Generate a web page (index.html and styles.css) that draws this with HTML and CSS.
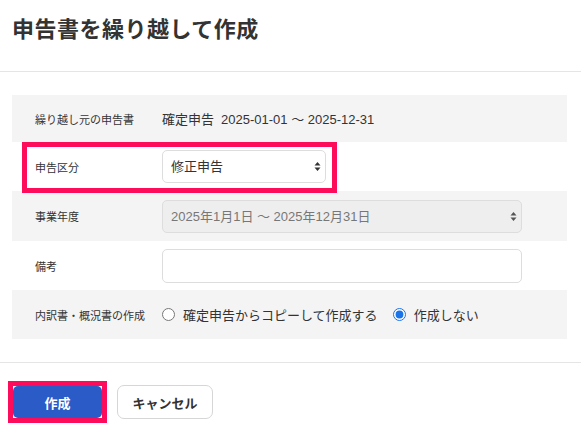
FILE: index.html
```html
<!DOCTYPE html>
<html lang="ja">
<head>
    <meta charset="UTF-8">
    <meta name="viewport" content="width=device-width, initial-scale=1.0">
    <title>申告書を繰り越して作成</title>
    <link rel="stylesheet" href="styles.css">
</head>
<body>
    <div class="modal-header">
        <h1 class="modal-title">申告書を繰り越して作成</h1>
    </div>

    <div class="modal-body">
        <div class="form-table">
            <div class="form-row shaded first">
                <div class="form-label">繰り越し元の申告書</div>
                <div class="form-value">
                    <span class="source-kind">確定申告</span>2025-01-01 ～ 2025-12-31
                </div>
            </div>
            <div class="form-row marked">
                <span class="mark-box"></span>
                <div class="form-label">申告区分</div>
                <div class="form-value">
                    <div class="select-wrap short">
                        <select class="form-select">
                            <option>修正申告</option>
                        </select>
                        <svg class="select-arrows" width="7" height="11" viewBox="0 0 7 11"><path d="M3.5 1L6.5 4.5H0.5Z M3.5 10L0.5 6.5H6.5Z" fill="#333"/></svg>
                    </div>
                </div>
            </div>
            <div class="form-row shaded tall">
                <div class="form-label">事業年度</div>
                <div class="form-value">
                    <div class="select-wrap">
                        <select class="form-select" disabled>
                            <option>2025年1月1日 ～ 2025年12月31日</option>
                        </select>
                        <svg class="select-arrows" width="7" height="11" viewBox="0 0 7 11"><path d="M3.5 1L6.5 4.5H0.5Z M3.5 10L0.5 6.5H6.5Z" fill="#555"/></svg>
                    </div>
                </div>
            </div>
            <div class="form-row">
                <div class="form-label">備考</div>
                <div class="form-value">
                    <input type="text" class="form-input">
                </div>
            </div>
            <div class="form-row shaded">
                <div class="form-label">内訳書・概況書の作成</div>
                <div class="form-value radios">
                    <label class="radio"><input type="radio" name="copy">確定申告からコピーして作成する</label>
                    <label class="radio"><input type="radio" name="copy" checked>作成しない</label>
                </div>
            </div>
        </div>
    </div>

    <div class="modal-footer">
        <span class="mark-wrap"><button class="btn btn-primary">作成</button></span>
        <button class="btn btn-default">キャンセル</button>
    </div>
</body>
</html>
```

FILE: styles.css
```css
body {
    margin: 0;
    font-family: "Liberation Sans", "Noto Sans CJK JP", sans-serif;
    color: #333;
    background: #fff;
}

.modal-header {
    height: 72px;
    box-sizing: border-box;
    padding: 16px 12px 0;
    border-bottom: 1px solid #e5e5e5;
}
.modal-title {
    margin: 0;
    font-size: 22px;
    line-height: 28px;
    letter-spacing: 0.5px;
    font-weight: bold;
    color: #333;
}

.modal-body {
    padding: 23px 14px 23px 12px;
    border-bottom: 1px solid #e5e5e5;
}
.form-row {
    display: flex;
    align-items: center;
    min-height: 49px;
    padding: 0 0 0 23px;
    box-sizing: border-box;
}
.form-row.first {
    min-height: 47px;
}
.form-row.tall {
    min-height: 50px;
}
.form-row.shaded {
    background: #f5f4f5;
}
.form-row.marked {
    position: relative;
}
.mark-box {
    position: absolute;
    left: 10px;
    top: 0;
    width: 315px;
    height: 51px;
    box-sizing: border-box;
    border: 5px solid #fc0c5a;
    pointer-events: none;
}
.form-label {
    width: 127px;
    flex-shrink: 0;
    font-size: 11px;
    color: #333;
}
.form-value {
    font-size: 13px;
    color: #333;
}
.source-kind {
    margin-right: 7px;
}

.select-wrap {
    position: relative;
    width: 360px;
}
.select-wrap.short {
    width: 164px;
}
.form-select {
    appearance: none;
    display: block;
    width: 100%;
    height: 33px;
    padding: 0 8px;
    border: 1px solid #ddd;
    border-radius: 5px;
    background: #fff;
    font-family: inherit;
    font-size: 13px;
    color: #333;
}
.form-select:disabled {
    background: #efeeee;
    color: #777;
    opacity: 1;
}
.select-arrows {
    position: absolute;
    right: 5px;
    top: 11px;
}
.form-input {
    display: block;
    width: 360px;
    height: 34px;
    box-sizing: border-box;
    border: 1px solid #ddd;
    border-radius: 5px;
    background: #fff;
}

.radios {
    display: flex;
    align-items: center;
    gap: 15px;
}
.radio {
    display: flex;
    align-items: center;
    gap: 8px;
    font-size: 13px;
}
.radio input {
    margin: 0;
    width: 13px;
    height: 13px;
    accent-color: #1a73e8;
}

.modal-footer {
    display: flex;
    align-items: center;
    gap: 10px;
    padding: 18px 8px;
}
.mark-wrap {
    display: inline-flex;
    border: 5px solid #fc0c5a;
    background: #fff;
}
.btn {
    font-family: inherit;
    font-size: 13px;
    font-weight: bold;
    border-radius: 5px;
    cursor: pointer;
}
.btn-primary {
    width: 89px;
    height: 32px;
    border: none;
    background: #2a5bc6;
    color: #fff;
}
.btn-default {
    width: 96px;
    height: 34px;
    border: 1px solid #d6d6d6;
    border-radius: 7px;
    background: #fff;
    color: #333;
}
```
